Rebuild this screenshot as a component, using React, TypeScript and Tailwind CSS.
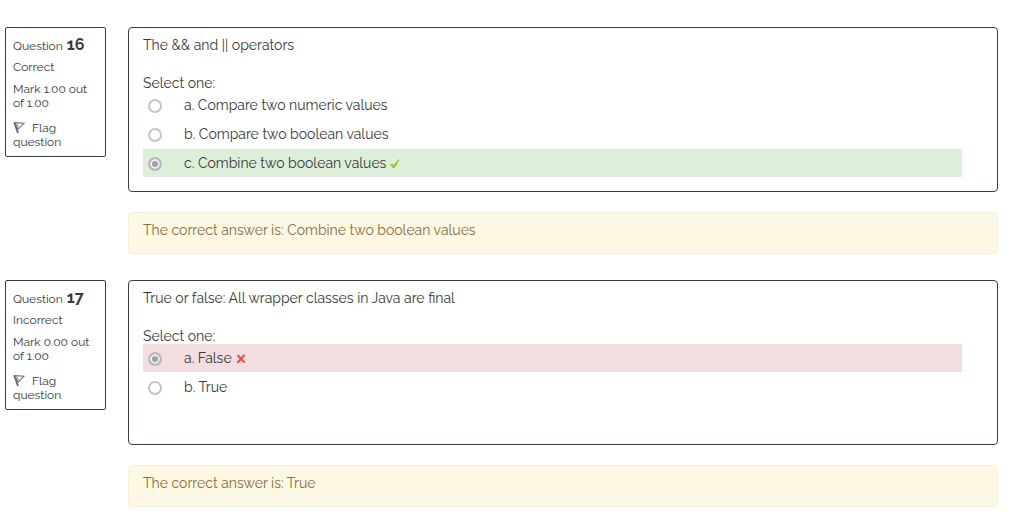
import React from "react";

type Option = { letter: string; text: string };

type Question = {
  number: number;
  state: "Correct" | "Incorrect";
  mark: string;
  text: string;
  options: Option[];
  chosen: string;
  answer: string;
};

const questions: Question[] = [
  {
    number: 16,
    state: "Correct",
    mark: "1.00",
    text: "The && and || operators",
    options: [
      { letter: "a", text: "Compare two numeric values" },
      { letter: "b", text: "Compare two boolean values" },
      { letter: "c", text: "Combine two boolean values" },
    ],
    chosen: "c",
    answer: "Combine two boolean values",
  },
  {
    number: 17,
    state: "Incorrect",
    mark: "0.00",
    text: "True or false: All wrapper classes in Java are final",
    options: [
      { letter: "a", text: "False" },
      { letter: "b", text: "True" },
    ],
    chosen: "a",
    answer: "True",
  },
];

function FlagIcon() {
  return (
    <svg viewBox="0 0 12 13" className="mr-[7px] inline-block h-[13px] w-3 align-[-2px]" aria-hidden="true">
      <path d="M1.2 1.2 L5 12" stroke="#666" strokeWidth="1.8" fill="none" />
      <path d="M2 1.6 L11 2.2 L5 8.3 Z" stroke="#777" strokeWidth="1.2" fill="#fff" />
      <path d="M4.4 3.2 L5.4 6.2" stroke="#999" strokeWidth="1" fill="none" />
    </svg>
  );
}

function TickIcon() {
  return (
    <svg viewBox="0 0 10 10" className="ml-1 inline-block size-2.5 align-[-1px]" role="img" aria-label="Correct">
      <path d="M0.2 5.6 L2 4.6 L3.6 6 L8.2 0.6 L9.6 0.8 L4.6 9.2 H2.9 Z" fill="#99cc33" />
    </svg>
  );
}

function CrossIcon() {
  return (
    <svg viewBox="0 0 10 10" className="ml-1 inline-block size-2.5 align-[-1px]" role="img" aria-label="Incorrect">
      <path d="M1.6 1.2 L8.6 8.6 M8.4 1 L1.4 8.8" stroke="#ff4141" strokeWidth="2" fill="none" />
    </svg>
  );
}

function QuestionInfo({ q }: { q: Question }) {
  return (
    <aside className="w-[101px] shrink-0 self-start rounded-xs border border-[#343f48] px-[7px] pt-2 pb-[7px] text-xs leading-[14px]">
      <h3 className="flex h-[18px] items-baseline gap-1 leading-[18px]">
        Question <span className="text-base leading-[18px] font-bold">{q.number}</span>
      </h3>
      <div className="mt-1.5">{q.state}</div>
      <div className="mt-2">{`Mark ${q.mark} out of 1.00`}</div>
      <a href="#flag" className="mt-[11px] block">
        <FlagIcon />
        Flag question
      </a>
    </aside>
  );
}

function QuestionBlock({ q }: { q: Question }) {
  const band = q.state === "Correct" ? "bg-[#ddefd8]" : "bg-[#f2dede]";
  return (
    <section className="flex gap-[22px]">
      <QuestionInfo q={q} />
      <div className="min-w-0 flex-1">
        <div className="min-h-[165px] rounded-[4px] border border-[#343f48] px-3.5 pt-[7px] pb-3.5">
          <p>{q.text}</p>
          <fieldset className="mt-[18px]">
            <legend>Select one:</legend>
            <div className="-mt-0.5 mr-[21px] flex flex-col gap-px">
              {q.options.map((o) => {
                const id = `q${q.number}-${o.letter}`;
                const chosen = o.letter === q.chosen;
                return (
                  <div key={o.letter} className={`flex h-7 items-center pl-[5px] ${chosen ? band : ""}`}>
                    <input
                      type="radio"
                      id={id}
                      name={`q${q.number}`}
                      disabled
                      defaultChecked={chosen}
                      className="mt-0.5 mr-[22px] size-3.5 shrink-0 appearance-none rounded-full border-2 border-[#c3c3c8] bg-white checked:border-[#b9b9bd] checked:bg-[#a0a0a8] checked:shadow-[inset_0_0_0_2px_#eeeeee]"
                    />
                    <label htmlFor={id}>
                      {`${o.letter}. ${o.text}`}
                      {chosen && (q.state === "Correct" ? <TickIcon /> : <CrossIcon />)}
                    </label>
                  </div>
                );
              })}
            </div>
          </fieldset>
        </div>
        <div className="mt-5 rounded-[4px] border border-[#fbeed5] bg-[#fdf8e3] px-3.5 pt-[7px] pb-[13px] text-[#8a6d3b]">
          {`The correct answer is: ${q.answer}`}
        </div>
      </div>
    </section>
  );
}

export default function App() {
  return (
    <main className="flex flex-col gap-[26px] bg-white pt-[27px] pr-[17px] pb-4 pl-[5px] font-['Raleway','Lato',sans-serif] text-sm leading-5 text-[#373a3c]">
      {questions.map((q) => (
        <QuestionBlock key={q.number} q={q} />
      ))}
    </main>
  );
}
